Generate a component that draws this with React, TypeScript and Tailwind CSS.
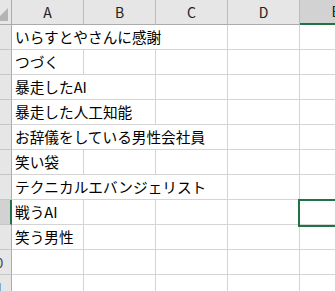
import React from "react";

const FONT = '"Noto Sans CJK JP", "Noto Sans", sans-serif';

type Row = { n: number; text?: string; span?: number };

const rows: Row[] = [
  { n: 1, text: "いらすとやさんに感謝", span: 3 },
  { n: 2, text: "つづく", span: 1 },
  { n: 3, text: "暴走したAI", span: 2 },
  { n: 4, text: "暴走した人工知能", span: 2 },
  { n: 5, text: "お辞儀をしている男性会社員", span: 3 },
  { n: 6, text: "笑い袋", span: 1 },
  { n: 7, text: "テクニカルエバンジェリスト", span: 3 },
  { n: 8, text: "戦うAI", span: 1 },
  { n: 9, text: "笑う男性", span: 1 },
  { n: 10 },
  { n: 11 },
];

const cols = ["A", "B", "C", "D", "E"];

function RowHeader({ n, selected }: { n: number; selected: boolean }) {
  return (
    <div
      className={
        selected
          ? "w-[12px] h-[25px] shrink-0 overflow-hidden bg-[#d2d2d2] border-r-2 border-r-[#217346] border-b border-b-[#c6c6c6] flex items-center"
          : "w-[12px] h-[25px] shrink-0 overflow-hidden bg-[#e6e6e6] border-r border-r-[#ababab] border-b border-b-[#c6c6c6] flex items-center"
      }
    >
      <div
        className={
          selected
            ? "ml-[-20px] w-[31px] shrink-0 text-center text-[14px] text-[#217346]"
            : "ml-[-20px] w-[31px] shrink-0 text-center text-[14px] text-[#444]"
        }
      >
        {n}
      </div>
    </div>
  );
}

function Cell({ span, text }: { span: number; text?: string }) {
  return (
    <div
      className="h-[25px] shrink-0 border-r border-b border-[#d4d4d4] flex items-end pl-[3px] pb-[2px] overflow-hidden whitespace-nowrap"
      style={{ width: 72 * span }}
    >
      {text ? (
        <span className="text-[14.67px] leading-[20px] text-black">{text}</span>
      ) : null}
    </div>
  );
}

export default function App() {
  return (
    <div
      className="relative w-[335px] h-[291px] overflow-hidden bg-white"
      style={{ fontFamily: FONT }}
    >
      <div className="flex w-[372px]">
        <div className="w-[12px] h-[25px] shrink-0 bg-[#e6e6e6] border-r border-r-[#ababab] border-b border-b-[#ababab] overflow-hidden">
          <svg width="11" height="24" viewBox="0 0 11 24">
            <polygon points="0,16 8,8 8,21 0,21" fill="#b4b4b4" />
          </svg>
        </div>
        {cols.map((c) => (
          <div
            key={c}
            className={
              c === "E"
                ? "w-[72px] h-[25px] shrink-0 bg-[#d2d2d2] border-r border-r-[#bcbcbc] border-b-2 border-b-[#217346] flex items-center justify-center text-[14px] text-[#222]"
                : "w-[72px] h-[25px] shrink-0 bg-[#e6e6e6] border-r border-r-[#bcbcbc] border-b border-b-[#ababab] flex items-center justify-center text-[14px] text-[#222]"
            }
          >
            {c}
          </div>
        ))}
      </div>
      {rows.map((r) => {
        const span = r.span ?? 1;
        const rest = 5 - span;
        return (
          <div key={r.n} className="flex w-[372px]">
            <RowHeader n={r.n} selected={r.n === 8} />
            <Cell span={span} text={r.text} />
            {Array.from({ length: rest }).map((_, i) => (
              <Cell key={i} span={1} />
            ))}
          </div>
        );
      })}
      <div className="absolute left-[298px] top-[199px] w-[60px] h-[28px] border-2 border-[#217346]" />
    </div>
  );
}
